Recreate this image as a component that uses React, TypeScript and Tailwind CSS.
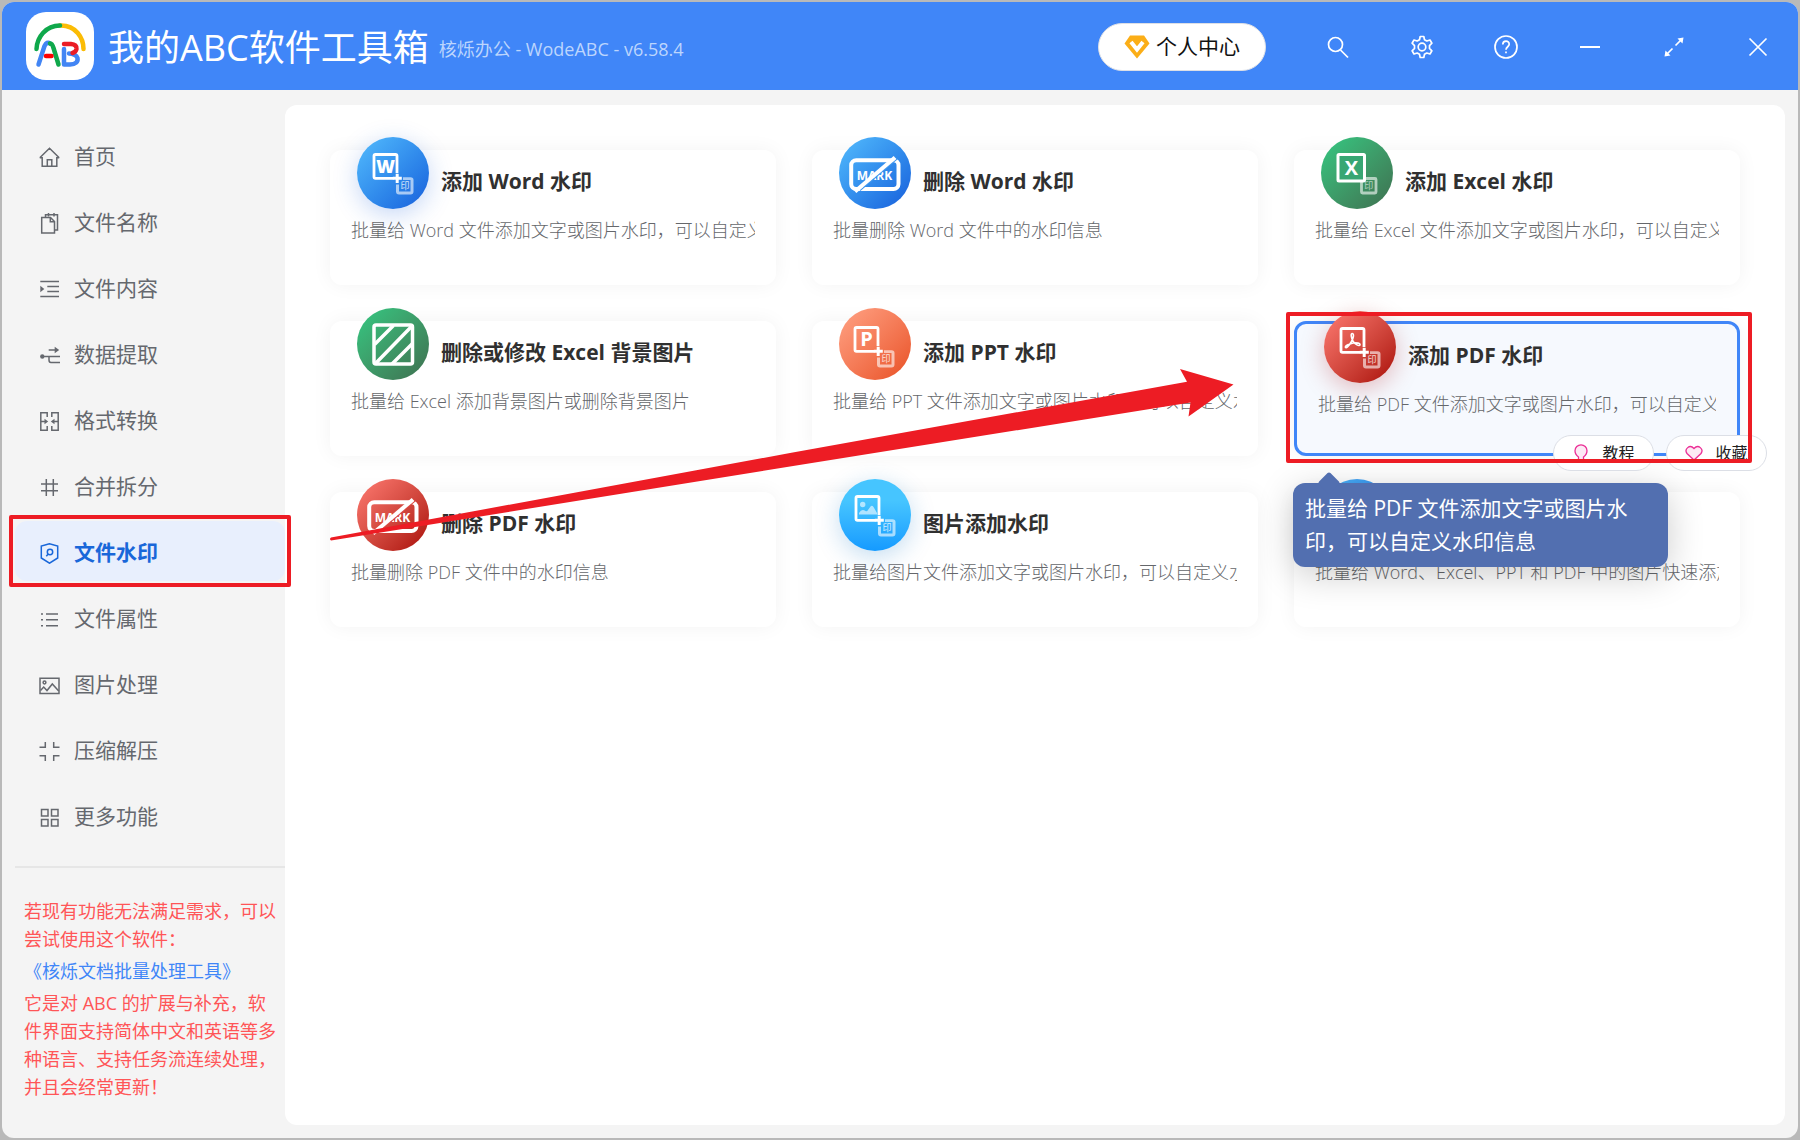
import React from "react";

type IconProps = { children: React.ReactNode };

const NavIcon = ({ children }: IconProps) => (
  <svg viewBox="0 0 21 21" className="size-[21px] shrink-0" fill="none" stroke="currentColor" strokeWidth="1.5" aria-hidden="true">
    {children}
  </svg>
);

const navItems: { label: string; icon: React.ReactNode }[] = [
  {
    label: "首页",
    icon: <path d="M.8 10.8 10.5 1.2l9.700 9.600M.8 10.800H3.200V19.300H17.800V10.800H20.200M8.300 19V12.800H12.800V19" />,
  },
  {
    label: "文件名称",
    icon: (
      <>
        <path d="M2.700 4.500H11.500L15.500 8.500V20H2.700ZM11.300 4.500V8.700H15.500" />
        <path d="M6.500 4V1.800H18.500V17H15.700M9.500 0V3.500M15 0V3.500" />
      </>
    ),
  },
  {
    label: "文件内容",
    icon: (
      <>
        <path d="M1.300 2.500H20M8.300 7.500H20M8.300 12.500H20M1.300 17.500H20" />
        <path d="M1.300 6.700 5.300 10 1.300 13.200Z" fill="currentColor" stroke="none" />
      </>
    ),
  },
  {
    label: "数据提取",
    icon: (
      <>
        <path d="M9.700 5H17M3 11.500H21M10 11.500V15Q10 17.500 12 17.500H21" />
        <path d="M15.700 1.700 20.200 5 15.700 8.300Z" fill="currentColor" stroke="none" />
        <circle cx="3.300" cy="11.500" r="2.200" fill="currentColor" stroke="none" />
      </>
    ),
  },
  {
    label: "格式转换",
    icon: (
      <>
        <path d="M8.200 6V1.800H1.800V19.200H8.200V15M12.800 6V1.800H19.200V19.200H12.800V15M1.800 10.500H7M19.200 10.500H14" />
        <path d="M5.500 7.700 9.200 10.500 5.500 13.300ZM15.500 7.700 11.800 10.500 15.500 13.300Z" fill="currentColor" stroke="none" />
      </>
    ),
  },
  { label: "合并拆分", icon: <path d="M7.300 2V19M14.300 2V19M2 7H19M2 13.800H19" /> },
  {
    label: "文件水印",
    icon: (
      <>
        <path d="M10.500.8 2.300 3V15L10.500 20.200 18.700 15V3Z" />
        <circle cx="11" cy="9" r="2.700" />
        <path d="M9.200 11 7.300 13.300" />
      </>
    ),
  },
  { label: "文件属性", icon: <path d="M2 5H4M7 5H19M2 10.800H4M7 10.800H19M2 16.700H4M7 16.700H19" /> },
  {
    label: "图片处理",
    icon: (
      <>
        <path d="M1 3.200H20V18.500H1Z" />
        <circle cx="5.500" cy="7.500" r="1.400" />
        <path d="M1.500 15.500 4.700 12 8 15.500 13.300 9 19.700 16" />
      </>
    ),
  },
  { label: "压缩解压", icon: <path d="M6.300 1V6.300H.5M14.700 1V6.300H20.500M6.300 20V14.700H.5M14.700 20V14.700H20.500" /> },
  { label: "更多功能", icon: <path d="M2.500 2.500H9V9H2.500ZM12.500 2.500H19V9H12.500ZM2.500 12.500H9V19H2.500ZM12.500 12.500H19V19H12.500Z" /> },
];

const sans = "'Noto Sans CJK SC', sans-serif";
const latin = "'Open Sans', sans-serif";

/** Small translucent seal frame in the corner of the "add" icons. */
const Seal = () => (
  <g opacity="0.6">
    <rect x="40.500" y="41.500" width="14.500" height="14.500" rx="1" fill="none" stroke="#fff" strokeWidth="2.800" />
    <text x="47.800" y="52.300" fontSize="9" fill="#fff" textAnchor="middle" fontFamily={sans}>印</text>
  </g>
);

const AddGlyph = ({ children }: IconProps) => (
  <>
    <path d="M36.500 41.300H18.500Q17 41.300 17 39.800V19Q17 17.500 18.500 17.500H38.500Q40 17.500 40 19V36" fill="none" stroke="#fff" strokeWidth="2.800" />
    {children}
    <path d="M46 40.200H53.500Q56.500 40.200 56.500 43V54.500Q56.500 57.500 53.500 57.500H42Q39 57.500 39 54.500V47.500H42V54.500H53.500V43H46Z" fill="#fff" opacity="0.6" />
    <text x="48" y="52.300" fontSize="9" fill="#fff" opacity="0.8" textAnchor="middle" fontFamily={sans}>印</text>
    <path d="M40.200 36.800V46M35.800 41.300H44.800" stroke="#fff" strokeWidth="3" />
  </>
);

const Letter = ({ x = 28.500, y = 37, children }: IconProps & { x?: number; y?: number }) => (
  <text x={x} y={y} fontSize="20" fontWeight="700" fill="#fff" textAnchor="middle" fontFamily={latin}>
    {children}
  </text>
);

const MarkGlyph = ({ shade }: { shade: string }) => (
  <>
    <rect x="12.200" y="23.200" width="47.300" height="28.800" rx="5" fill="none" stroke="#fff" strokeWidth="4" />
    <text x="35.500" y="42.500" fontSize="12" fontWeight="700" fill="#fff" textAnchor="middle" fontFamily={latin}>MARK</text>
    <path d="M21 53.500 58 22" stroke={shade} strokeWidth="1.200" />
    <path d="M16 54.500 56 20.500" stroke="#fff" strokeWidth="4" />
  </>
);

type Card = {
  title?: string;
  desc: string;
  circle: string;
  glyph: React.ReactNode;
  active?: boolean;
};

const blue = "bg-linear-to-br from-[#54bcfd] to-[#1a5edb]";
const green = "bg-linear-to-br from-[#32c982] to-[#3d7050]";
const orange = "bg-linear-to-br from-[#ffa284] to-[#e84f20]";
const red = "bg-linear-to-br from-[#ff7b72] to-[#a90000]";
const sky = "bg-linear-to-b from-[#46c5ff] from-30% to-[#149aff]";

const cards: Card[] = [
  {
    title: "添加 Word 水印",
    desc: "批量给 Word 文件添加文字或图片水印，可以自定义水印信息",
    circle: `${blue} shadow-[0_6px_24px_rgba(26,94,219,0.25)]`,
    glyph: (
      <AddGlyph>
        <text x="28.500" y="36" fontSize="18" fontWeight="800" fill="#fff" textAnchor="middle" fontFamily={latin}>W</text>
      </AddGlyph>
    ),
  },
  { title: "删除 Word 水印", desc: "批量删除 Word 文件中的水印信息", circle: blue, glyph: <MarkGlyph shade="#3f96ef" /> },
  {
    title: "添加 Excel 水印",
    desc: "批量给 Excel 文件添加文字或图片水印，可以自定义水印信息",
    circle: green,
    glyph: (
      <>
        <Seal />
        <rect x="17" y="17.500" width="26.500" height="26.500" rx="1" fill="#38a673" stroke="#fff" strokeWidth="3" />
        <Letter x={30.300} y={38}>X</Letter>
      </>
    ),
  },
  {
    title: "删除或修改 Excel 背景图片",
    desc: "批量给 Excel 添加背景图片或删除背景图片",
    circle: green,
    glyph: (
      <g fill="none" stroke="#fff" strokeWidth="3.500">
        <rect x="17" y="17" width="38.500" height="39" rx="2" />
        <path d="M17.500 36.500 36.500 17.500M18 56 55 18M35 56 55.500 35.500" />
      </g>
    ),
  },
  {
    title: "添加 PPT 水印",
    desc: "批量给 PPT 文件添加文字或图片水印，可以自定义水印信息",
    circle: orange,
    glyph: (
      <g transform="translate(-1 2)">
        <AddGlyph>
          <Letter y={36}>P</Letter>
        </AddGlyph>
      </g>
    ),
  },
  {
    title: "添加 PDF 水印",
    desc: "批量给 PDF 文件添加文字或图片水印，可以自定义水印信息",
    circle: `${red} shadow-[0_6px_24px_rgba(169,0,0,0.25)]`,
    active: true,
    glyph: (
      <AddGlyph>
        <path
          d="M28 22.500C30.500 22.500 29.500 27 27.500 30.500 25.500 34 22.500 37.500 21.500 36.500 20.500 34.800 26 32.500 29.500 32 33 31.500 36.500 32.200 36 34 35.200 35.800 31 33 29.200 30.500 27.300 27.800 26.500 22.500 28 22.500Z"
          fill="none"
          stroke="#fff"
          strokeWidth="1.600"
        />
      </AddGlyph>
    ),
  },
  {
    title: "删除 PDF 水印",
    desc: "批量删除 PDF 文件中的水印信息",
    circle: red,
    glyph: <MarkGlyph shade="#dc4740" />,
  },
  {
    title: "图片添加水印",
    desc: "批量给图片文件添加文字或图片水印，可以自定义水印信息",
    circle: `${sky} shadow-[0_6px_24px_rgba(20,120,200,0.25)]`,
    glyph: (
      <AddGlyph>
        <g fill="#fff" opacity="0.6">
          <circle cx="23.700" cy="25.500" r="2.700" />
          <path d="M20 35.500V34Q22.500 29.500 26.500 32 28 33 29 31L31.500 27.500Q33 26 34.500 28L38 34V35.500Z" />
        </g>
      </AddGlyph>
    ),
  },
  {
    desc: "批量给 Word、Excel、PPT 和 PDF 中的图片快速添加水印",
    circle: blue,
    glyph: null,
  },
];

const Logo = () => (
  <svg viewBox="0 0 68 68" className="size-[68px] shrink-0 rounded-[20px] bg-white" fill="none" strokeLinecap="round" strokeLinejoin="round" strokeWidth="4.500" aria-hidden="true">
    <path d="M34 13.500C50 13 57.500 26 57.500 37" stroke="#fbbc05" />
    <path d="M10.500 37C11 25 20 13.500 34 13.500" stroke="#0fa84b" />
    <path d="M12.500 52.500 18.500 34Q21 29 24 31.500" stroke="#4285f4" />
    <path d="M24 31.500Q26 31 27.500 36L32.500 52.500" stroke="#0fa84b" />
    <path d="M20 44H25.500" stroke="#ff0000" />
    <path d="M38 37V52.500H44Q52.500 52 51.500 46 50 42 43 41.500" stroke="#4285f4" />
    <path d="M38 32H45Q51 32.500 50.500 37 50 40 46.500 41" stroke="#ea1c24" />
  </svg>
);

const headerIcons: { label: string; icon: React.ReactNode }[] = [
  {
    label: "搜索",
    icon: (
      <>
        <circle cx="9.500" cy="9.500" r="7" />
        <path d="M14.500 15 22 22.500" />
      </>
    ),
  },
  {
    label: "设置",
    icon: (
      <>
        <path d="M10.200 1.500H13.800L14.500 4.700 16.800 6 20 5 21.900 8.200 19.500 10.600V13.400L21.900 15.800 20 19 16.800 18 14.500 19.300 13.800 22.500H10.200L9.500 19.300 7.200 18 4 19 2.100 15.800 4.500 13.400V10.600L2.100 8.200 4 5 7.200 6 9.500 4.700Z" strokeLinejoin="round" />
        <circle cx="12" cy="12" r="3.800" />
      </>
    ),
  },
  {
    label: "帮助",
    icon: (
      <>
        <circle cx="12" cy="12" r="11" />
        <path d="M8.800 9.500C8.800 5 15.200 5 15.200 9.300 15.200 11.800 12 11.800 12 14.800M12 16.500V18.300" />
      </>
    ),
  },
  { label: "最小化", icon: <path d="M2 12H22" strokeWidth="2" /> },
  {
    label: "还原",
    icon: (
      <>
        <path d="M13.500 10.500 19 5M10.500 13.500 5 19" />
        <path d="M15.500 3.500 21.500 2.500 20.500 8.500ZM8.500 20.500 2.500 21.500 3.500 15.500Z" fill="currentColor" stroke="none" />
      </>
    ),
  },
  { label: "关闭", icon: <path d="M3.500 3.500 20.500 20.500M20.500 3.500 3.500 20.500" /> },
];

function Header() {
  return (
    <header className="flex h-[88px] items-center justify-between bg-[#4086f8] pl-6 text-white">
      <div className="flex items-center">
        <Logo />
        <h1 className="ml-3.5 pt-1 text-[36px] leading-[44px]">我的ABC软件工具箱</h1>
        <p className="ml-2.5 pt-1.5 text-[18px] leading-[24px] text-[#bcd5fd]">核烁办公 - WodeABC - v6.58.4</p>
      </div>
      <div className="-mr-0.5 flex items-center pt-0.5">
        <button className="mr-[30px] flex h-12 w-[168px] items-center justify-center gap-1.5 rounded-full border border-[#dcdfe6] bg-white text-[21px] text-[#111]">
          <svg viewBox="0 0 26 24" className="h-6 w-[26px]" aria-hidden="true">
            <path d="M6 .5H20L25.500 8.500 13 23.500.5 8.500Z" fill="#fbae17" />
            <path d="M7 7 13 14.500 19 7" fill="none" stroke="#fff" strokeWidth="4" />
          </svg>
          个人中心
        </button>
        {headerIcons.map((item) => (
          <button key={item.label} aria-label={item.label} className="flex h-12 w-[84px] items-center justify-center">
            <svg viewBox="0 0 24 24" className="size-6" fill="none" stroke="currentColor" strokeWidth="1.700">
              {item.icon}
            </svg>
          </button>
        ))}
      </div>
    </header>
  );
}

function Sidebar() {
  return (
    <aside className="relative z-10 w-[283px] shrink-0 pt-[35px]">
      <nav className="flex flex-col gap-1.5 pl-[13px]">
        {navItems.map((item) => {
          const active = item.label === "文件水印";
          return (
            <a
              key={item.label}
              href="#"
              aria-current={active ? "page" : undefined}
              className={
                active
                  ? "relative flex h-[60px] items-center gap-3.5 rounded-xl bg-[#e8effd] pt-1 pl-6 text-[21px] font-bold text-[#1967d9]"
                  : "flex h-[60px] items-center gap-3.5 rounded-xl pt-1 pl-6 text-[21px] font-normal text-[#65686e]"
              }
            >
              <NavIcon>{item.icon}</NavIcon>
              {item.label}
              {active && <span className="pointer-events-none absolute -inset-x-1.5 -inset-y-1.5 rounded-xs border-4 border-[#ed1c24]" />}
            </a>
          );
        })}
      </nav>
      <div className="mt-[21px] ml-[13px] border-t-2 border-[#e6e6e6]" />
      <div className="mt-[29px] pr-1.5 pl-[22px] text-[18px] leading-[28px] text-[#ff5557]">
        <p>若现有功能无法满足需求，可以尝试使用这个软件：</p>
        <a href="#" className="my-1 block text-[#4086f8]">《核烁文档批量处理工具》</a>
        <p>它是对 ABC 的扩展与补充，软件界面支持简体中文和英语等多种语言、支持任务流连续处理，并且会经常更新！</p>
      </div>
    </aside>
  );
}

function PillButton({ label, children }: { label: string; children: React.ReactNode }) {
  return (
    <button className="flex h-9 w-[101px] items-center justify-center gap-3 rounded-full border border-[#dcdfe6] bg-white text-[16px] text-[#222]">
      <svg viewBox="0 0 18 18" className="size-[18px]" fill="#fdeaf5" stroke="#eb2f96" strokeWidth="1.300" aria-hidden="true">
        {children}
      </svg>
      {label}
    </button>
  );
}

function ActiveExtras() {
  return (
    <>
      <div className="absolute -right-[30px] -bottom-[18px] z-20 flex gap-3">
        <PillButton label="教程">
          <path d="M6.500 17V13Q3 10.500 3 6.800A6 6 0 0 1 15 6.800Q15 10.500 11.500 13V17Z" />
        </PillButton>
        <PillButton label="收藏">
          <path d="M9 16 2 9.500C-1 5.500 4.500-.5 9 4.500 13.500-.5 19 5.500 16 9.500Z" />
        </PillButton>
      </div>
      <div className="pointer-events-none absolute -top-3 -right-[15px] -bottom-[10px] -left-[11px] z-30 rounded-xs border-4 border-[#ed1c24]" />
      <div role="tooltip" className="absolute top-[159px] -left-1 z-10 w-[375px] rounded-xl bg-[#526fb0] px-3 py-[9px] text-[21px] leading-[33px] text-white shadow-[0_8px_36px_rgba(0,0,0,0.2)]">
        <span className="absolute -top-2 left-[28px] size-4 rotate-45 rounded-xs bg-[#526fb0]" />
        批量给 PDF 文件添加文字或图片水印，可以自定义水印信息
      </div>
    </>
  );
}

function FeatureCard({ card }: { card: Card }) {
  return (
    <article
      className={
        card.active
          ? "relative z-10 min-h-[135px] rounded-xl border-[3px] border-[#4086f8] bg-[#f6f9fe] px-[21px] shadow-[0_0_20px_rgba(0,0,0,0.05)]"
          : "relative min-h-[135px] rounded-xl bg-white px-[21px] shadow-[0_0_20px_rgba(0,0,0,0.05)]"
      }
    >
      <div className="flex items-start gap-3 pl-1.5">
        <div className={`-mt-[13px] size-[72px] shrink-0 rounded-full ${card.circle}`}>
          <svg viewBox="0 0 72 72" className="size-full" aria-hidden="true">
            {card.glyph}
          </svg>
        </div>
        <h2 className="pt-4 text-[21px] leading-[30px] font-bold whitespace-nowrap text-[#303030]">
          {card.title && <a href="#">{card.title}</a>}
        </h2>
      </div>
      <p className="mt-[7px] overflow-hidden text-[18px] leading-[28px] font-light whitespace-nowrap text-[#65676b]">{card.desc}</p>
      {card.active && <ActiveExtras />}
    </article>
  );
}

const Arrow = () => (
  <svg viewBox="0 0 904 172" className="pointer-events-none absolute top-[264px] left-[45px] z-40 h-[172px] w-[904px]" aria-hidden="true">
    <path d="M1 168.500 460 84 857 12.700 850 0 903.500 15.500 858.500 47.500 860.500 33.500 460 97.500 1 171.500Q-1 170 1 168.500Z" fill="#ed1c24" />
  </svg>
);

export default function App() {
  return (
    <div className="flex min-h-screen flex-col bg-[#b9b9b9] p-0.5 font-['Open_Sans','Noto_Sans_CJK_SC',sans-serif]">
      <div className="flex grow flex-col overflow-hidden rounded-xl bg-[#f4f4f4]">
        <Header />
        <div className="flex grow">
          <Sidebar />
          <main className="relative mt-[15px] mr-[13px] mb-[13px] grow rounded-xl bg-white p-[45px]">
            <div className="grid grid-cols-3 gap-9">
              {cards.map((card) => (
                <FeatureCard key={card.desc} card={card} />
              ))}
            </div>
            <Arrow />
          </main>
        </div>
      </div>
    </div>
  );
}
